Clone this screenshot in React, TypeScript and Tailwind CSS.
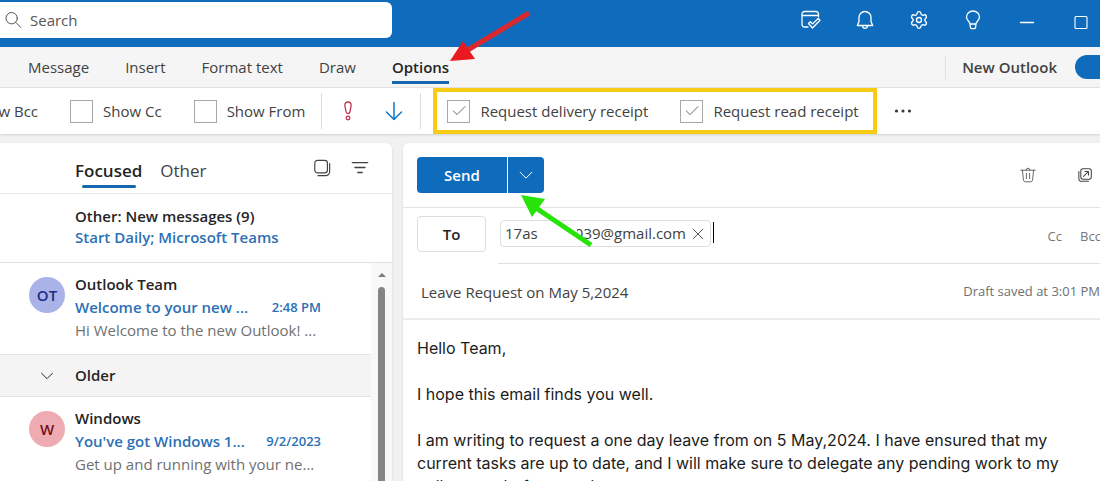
import { useState } from 'react'
import type { ReactNode } from 'react'
import { Settings } from 'lucide-react'

interface IconProps {
  className?: string
  strokeWidth?: number
  children: ReactNode
}

function Icon({ className = 'size-5', strokeWidth = 1.1, children }: IconProps) {
  return (
    <svg
      viewBox="0 0 20 20"
      fill="none"
      stroke="currentColor"
      strokeWidth={strokeWidth}
      strokeLinecap="round"
      strokeLinejoin="round"
      aria-hidden="true"
      className={`shrink-0 ${className}`}
    >
      {children}
    </svg>
  )
}

const RIBBON_TABS = ['Message', 'Insert', 'Format text', 'Draw', 'Options']

const MAILS = {
  recent: {
    initials: 'OT',
    sender: 'Outlook Team',
    subject: 'Welcome to your new ...',
    time: '2:48 PM',
    preview: 'Hi Welcome to the new Outlook! ...',
    avatar: 'bg-[#a9b3e8] text-[#1d2b85]',
  },
  older: {
    initials: 'W',
    sender: 'Windows',
    subject: "You've got Windows 1...",
    time: '9/2/2023',
    preview: 'Get up and running with your ne...',
    avatar: 'bg-[#eeacb2] text-[#75101c]',
  },
}

const BODY = `Hello Team,

I hope this email finds you well.

I am writing to request a one day leave from on 5 May,2024. I have ensured that my
current tasks are up to date, and I will make sure to delegate any pending work to my
colleagues before my departure.`

function TopBar() {
  return (
    <header className="flex h-[47px] shrink-0 items-start justify-between bg-[#0f6cbd] text-white">
      <label className="mt-[2px] flex h-[36px] w-[392px] items-center gap-2 rounded-r-md bg-white pl-1 text-[#505050]">
        <Icon className="size-[18px]">
          <circle cx="8.5" cy="8" r="6.3" />
          <path d="m13.2 12.8 5.3 5.4" />
        </Icon>
        <input
          type="search"
          aria-label="Search"
          placeholder="Search"
          className="w-full bg-transparent text-[15px] outline-none placeholder:text-[#555]"
        />
      </label>
      <div className="flex h-10 items-center gap-[34px] pr-[9px]">
        <button aria-label="My Day">
          <Icon strokeWidth={1.3}>
            <path d="M17.5 7V4A2.5 2.5 0 0 0 15 1.500H3.500A2.500 2.500 0 0 0 1 4v10.500A2.500 2.500 0 0 0 3.500 17H7M1 5.500h16.500" />
            <path d="m7.5 13.500 1.800-1.800 2.200 2.200 5.700-5.400 1.800 1.800-7.500 7.700z" />
          </Icon>
        </button>
        <button aria-label="Notifications">
          <Icon strokeWidth={1.3}>
            <path d="M10 1.500c-3.500 0-6 2.700-6 6v4L2.300 15.500h15.400L16 11.500v-4c0-3.300-2.500-6-6-6zM7.500 15.800a2.500 2.500 0 0 0 5 0" />
          </Icon>
        </button>
        <button aria-label="Settings">
          <Settings size={20} strokeWidth={1.600} />
        </button>
        <button aria-label="Tips">
          <Icon strokeWidth={1.3}>
            <path d="M7 14c0-2.300-3.500-3.500-3.500-7a6.500 6 0 0 1 13 0c0 3.500-3.500 4.700-3.500 7zM7 14l.5 3.600c.2.900.6 1.100 1.300 1.100h2.400c.7 0 1.100-.2 1.300-1.100L13 14" />
          </Icon>
        </button>
        <button aria-label="Minimize">
          <Icon strokeWidth={1.3}>
            <path d="M3.500 12.500h13" />
          </Icon>
        </button>
        <button aria-label="Maximize">
          <Icon>
            <rect x="4" y="6.500" width="12" height="12" rx="1" />
          </Icon>
        </button>
      </div>
    </header>
  )
}

function RibbonTabs() {
  return (
    <nav className="flex h-[41px] shrink-0 items-center justify-between border-b border-[#e4e4e4] bg-[#f5f5f5]">
      <div className="flex items-center gap-9 pl-[28px]">
        {RIBBON_TABS.map((tab) => (
          <button
            key={tab}
            className={
              tab === 'Options'
                ? 'border-b-[3px] border-[#1767b0] pt-[2px] font-semibold leading-7 text-[#242424]'
                : 'leading-7'
            }
          >
            {tab}
          </button>
        ))}
      </div>
      <div className="flex items-center">
        <span className="mr-4 h-6 border-l border-[#e0e0e0]" />
        <label htmlFor="new-outlook" className="mr-[18px] font-semibold">New Outlook</label>
        <input
          id="new-outlook"
          type="checkbox"
          defaultChecked
          className="h-6 w-[25px] appearance-none rounded-l-full bg-[#0f6cbd]"
        />
      </div>
    </nav>
  )
}

function CheckField({ label, initial = false }: { label: string; initial?: boolean }) {
  const [checked, setChecked] = useState(initial)
  return (
    <label className="flex items-center gap-[10px] whitespace-nowrap">
      <span className="grid size-[23px] place-items-center">
        <input
          type="checkbox"
          checked={checked}
          onChange={() => setChecked(!checked)}
          className="col-start-1 row-start-1 size-[23px] appearance-none border border-[#a8a8a8] bg-white"
        />
        {checked && (
          <Icon className="pointer-events-none col-start-1 row-start-1 size-4 text-[#555]">
            <path d="m3 10 4.500 4.500L17.500 4.500" />
          </Icon>
        )}
      </span>
      {label}
    </label>
  )
}

function Toolbar() {
  return (
    <div className="flex h-[46px] shrink-0 items-center bg-white shadow-sm">
      <div className="flex items-center gap-[32px]">
        <span className="-ml-[28px] whitespace-nowrap">Show Bcc</span>
        <CheckField label="Show Cc" />
        <CheckField label="Show From" />
      </div>
      <span className="ml-4 h-9 border-l border-[#dcdcdc]" />
      <button aria-label="High importance" className="ml-4 text-[#c4314b]">
        <Icon strokeWidth={1.3}>
          <path d="M10 1c-2.200 0-3.400 1.500-3.100 3.700l1.200 6.300c.2 1 .8 1.500 1.900 1.500s1.700-.5 1.900-1.500l1.200-6.300C13.400 2.500 12.200 1 10 1z" />
          <circle cx="10" cy="17" r="1.800" />
        </Icon>
      </button>
      <button aria-label="Low importance" className="ml-[26px] text-[#0f78cf]">
        <Icon strokeWidth={1.5}>
          <path d="M10 1.500v17M2.500 11l7.500 7.500 7.500-7.500" />
        </Icon>
      </button>
      <span className="ml-4 h-9 border-l border-[#dcdcdc]" />
      <div className="ml-3 flex h-full items-center gap-[32px] border-4 border-[#f8cb16] pl-[10px] pr-[14px]">
        <CheckField label="Request delivery receipt" initial />
        <CheckField label="Request read receipt" initial />
      </div>
      <button aria-label="More options" className="ml-4 text-[#333]">
        <Icon>
          <g fill="currentColor">
            <circle cx="3.500" cy="10" r="1" />
            <circle cx="10" cy="10" r="1" />
            <circle cx="16.500" cy="10" r="1" />
          </g>
        </Icon>
      </button>
    </div>
  )
}

function MailItem({ mail }: { mail: typeof MAILS.recent }) {
  return (
    <article className="flex gap-[10px] pb-3 pl-[29px] pr-[50px] pt-[10px]">
      <span className={`mt-1 grid size-9 shrink-0 place-items-center rounded-full text-[15px] font-semibold ${mail.avatar}`}>
        {mail.initials}
      </span>
      <div className="min-w-0 flex-1 leading-[23px]">
        <h3 className="font-semibold text-[#242424]">{mail.sender}</h3>
        <div className="flex items-center justify-between gap-4 font-semibold text-[#2b70b5]">
          <span className="truncate">{mail.subject}</span>
          <time className="shrink-0 text-[13px]">{mail.time}</time>
        </div>
        <p className="truncate text-[#707070]">{mail.preview}</p>
      </div>
    </article>
  )
}

function MessageList() {
  return (
    <section className="flex w-[392px] shrink-0 flex-col rounded-tr-md bg-white shadow">
      <div className="flex h-[51px] shrink-0 items-center border-b border-[#e8e8e8] pl-[75px] pr-[23px] pt-2">
        <button className="flex flex-col items-center text-[17px] font-semibold leading-7 text-[#242424]">
          Focused
          <span className="h-[3px] w-[54px] rounded-full bg-[#1767b0]" />
        </button>
        <button className="ml-[18px] pb-[3px] text-[17px] leading-7">Other</button>
        <button aria-label="Select" className="ml-auto pb-2">
          <Icon className="size-[18px]" strokeWidth={1.3}>
            <rect x="2" y="1.500" width="14" height="14" rx="3" />
            <path d="M18.500 5v9a4.500 4.500 0 0 1-4.500 4.500H5.500" />
          </Icon>
        </button>
        <button aria-label="Filter" className="ml-5 pb-2">
          <Icon className="size-[18px]" strokeWidth={1.600}>
            <path d="M1.500 4h17M4.500 9.500h11M7.500 15h5" />
          </Icon>
        </button>
      </div>
      <div className="h-[69px] shrink-0 border-b border-[#e0e0e0] pl-[75px] pt-3 font-semibold leading-[21px]">
        <p className="text-[#242424]">Other: New messages (9)</p>
        <p className="text-[#2b70b5]">Start Daily; Microsoft Teams</p>
      </div>
      <div className="flex min-h-0 flex-1">
        <div className="min-w-0 flex-1 overflow-hidden">
          <MailItem mail={MAILS.recent} />
          <button className="flex h-[43px] w-full items-center gap-[19px] border-y border-[#e2e2e2] bg-[#f4f4f4] pl-[38px] font-semibold text-[#242424]">
            <Icon className="size-[18px]">
              <path d="m4 7 6 6 6-6" />
            </Icon>
            Older
          </button>
          <MailItem mail={MAILS.older} />
        </div>
        {/* scroll track */}
        <div className="flex w-[21px] flex-col items-center gap-[10px] bg-[#f8f8f8] pt-[10px]">
          <span className="border-x-4 border-b-4 border-x-transparent border-b-[#7a7a7a]" />
          <span className="w-[7px] flex-1 rounded-t-full bg-[#858585]" />
        </div>
      </div>
    </section>
  )
}

function Compose() {
  return (
    <main className="flex min-w-0 flex-1 flex-col rounded-tl-md bg-white shadow">
      <div className="flex h-[65px] shrink-0 items-center border-b border-[#e4e4e4] pl-[14px] pr-2">
        <button className="h-9 w-[90px] rounded-l-[4px] bg-[#0f6cbd] font-semibold text-white">Send</button>
        <button aria-label="Send options" className="ml-px flex h-9 w-9 items-center justify-center rounded-r-[4px] bg-[#0f6cbd] text-white">
          <Icon className="size-[18px]">
            <path d="m3.500 7 6.500 6.500L16.500 7" />
          </Icon>
        </button>
        <button aria-label="Discard" className="ml-auto text-[#555]">
          <Icon className="size-4">
            <path d="M1 4h18M7.500 4a2.500 2.500 0 0 1 5 0M3 4l1.300 12.500a2.500 2.500 0 0 0 2.500 2h6.400a2.500 2.500 0 0 0 2.500-2L17 4M8 8v6.500M12 8v6.500" />
          </Icon>
        </button>
        <button aria-label="Open in new window" className="ml-[42px] text-[#444]">
          <Icon className="size-[14px]" strokeWidth={1.5}>
            <rect x="4" y="1" width="15" height="15" rx="3" />
            <path d="M1.200 5v10.500A3.500 3.500 0 0 0 4.700 19H15M8 12l7-7M10 5h5v5" />
          </Icon>
        </button>
      </div>

      <div className="flex h-14 shrink-0 pl-[14px]">
        <button className="mt-2 h-9 w-[69px] rounded-[4px] border border-[#dedede] font-semibold text-[#242424]">To</button>
        <div className="ml-3 flex min-w-0 flex-1 items-start border-b border-[#e0e0e0] pl-[2px] pt-3">
          <div className="flex h-[27px] shrink-0 items-center rounded-[4px] border border-[#dedede] px-1">
            <span className="w-[72px]">17as</span>
            <span className="flex w-[109px] justify-end overflow-hidden">039@gmail.com</span>
            <button aria-label="Remove recipient" className="ml-1">
              <Icon className="size-4">
                <path d="m4 4 12 12M16 4 4 16" />
              </Icon>
            </button>
          </div>
          <span className="ml-[2px] mt-[2px] h-[21px] border-l border-black" />
          <div className="ml-auto flex shrink-0 gap-[18px] pt-1 text-[13px] leading-6 text-[#777]">
            <button>Cc</button>
            <button className="w-5 overflow-hidden text-left">Bcc</button>
          </div>
        </div>
      </div>

      <div className="flex h-[56px] shrink-0 items-center border-b-2 border-[#ececec] pl-[18px] pt-[2px]">
        <input
          aria-label="Subject"
          defaultValue="Leave Request on May 5,2024"
          className="min-w-0 flex-1 text-[15px] outline-none"
        />
        <span className="shrink-0 whitespace-nowrap text-[13px] text-[#707070]">Draft saved at 3:01 PM</span>
      </div>

      <textarea
        aria-label="Message body"
        defaultValue={BODY}
        className='min-h-0 w-full flex-1 resize-none overflow-hidden whitespace-pre pl-[14px] pt-[17px] font-["Inter",sans-serif] text-base leading-[23px] text-[#1c1c1c] outline-none'
      />
    </main>
  )
}

export default function App() {
  return (
    <div className='relative flex h-screen flex-col overflow-hidden bg-[#f1f1f1] font-["Open_Sans","Noto_Sans",sans-serif] text-[15px] text-[#424242]'>
      <TopBar />
      <RibbonTabs />
      <Toolbar />
      <div className="flex min-h-0 flex-1 gap-[11px] pt-[9px]">
        <MessageList />
        <Compose />
      </div>

      {/* pointers to the Options tab and the send menu */}
      <svg className="pointer-events-none absolute left-[450px] top-[10px] h-[52px] w-[82px]" viewBox="0 0 82 52" aria-hidden="true">
        <path d="M79 3 16 41" stroke="#d9292f" strokeWidth="5" />
        <path d="M0 51 13 31 25 49z" fill="#e8191f" />
      </svg>
      <svg className="pointer-events-none absolute left-[520px] top-[194px] h-[54px] w-[74px]" viewBox="0 0 74 54" aria-hidden="true">
        <path d="M71 51 16 14" stroke="#27e308" strokeWidth="5" />
        <path d="M1 1 25 5 12 23z" fill="#27e308" />
      </svg>
    </div>
  )
}
